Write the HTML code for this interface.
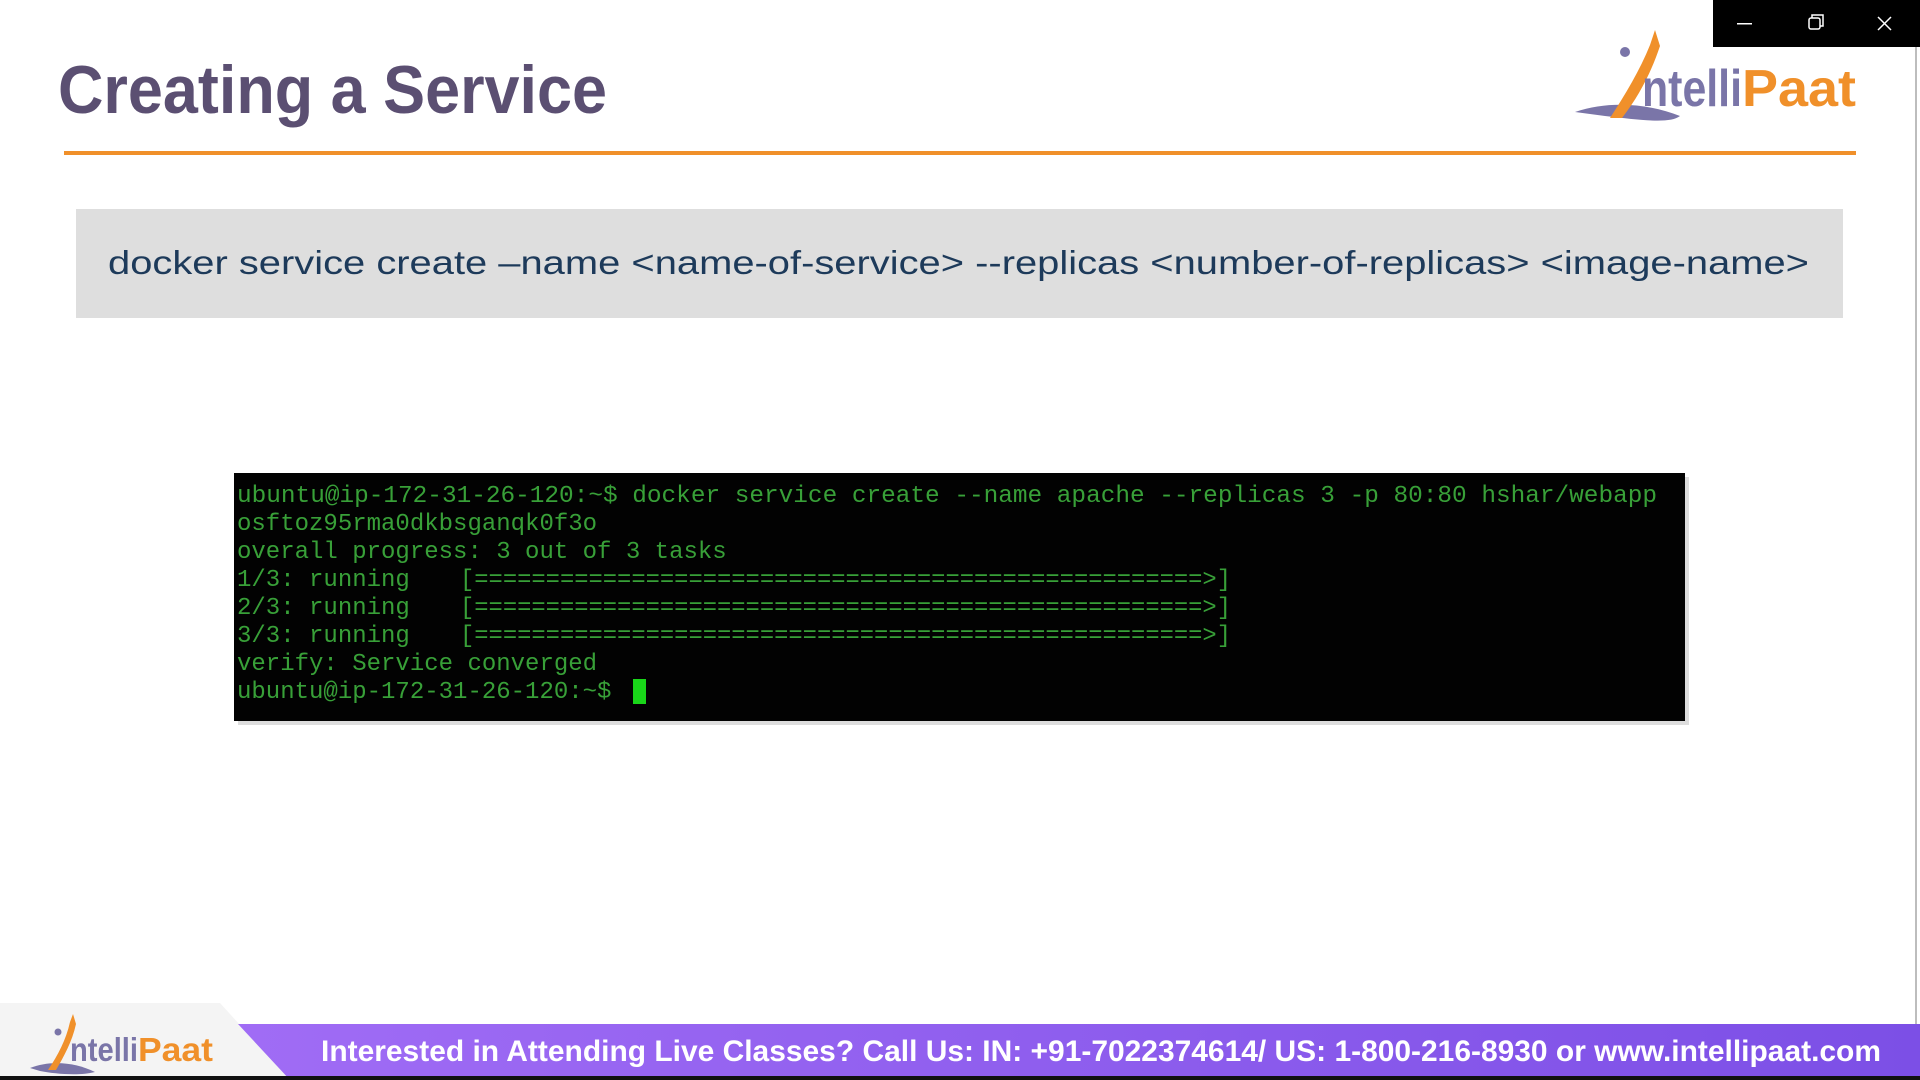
<!DOCTYPE html>
<html><head><meta charset="utf-8"><style>
html,body{margin:0;padding:0;width:1920px;height:1080px;overflow:hidden;background:#fff}
svg{display:block}
</style></head><body>
<svg width="1920" height="1080" viewBox="0 0 1920 1080" xmlns="http://www.w3.org/2000/svg">
<defs>
<linearGradient id="pg" x1="0" x2="1" y1="0" y2="0"><stop offset="0" stop-color="#a06cf5"/><stop offset="1" stop-color="#7c4fe6"/></linearGradient>
</defs>
<rect width="1920" height="1080" fill="#fff"/>
<text x="58" y="113" font-family="Liberation Sans, sans-serif" font-weight="bold" font-size="68" fill="#5b4f72" textLength="549" lengthAdjust="spacingAndGlyphs">Creating a Service</text>
<rect x="64" y="151" width="1792" height="4" fill="#f0902a"/>
<g>
<path d="M1575 112 C1610 100 1650 104 1680 116 C1670 124 1640 120 1605 116 Z" fill="#7a75a8"/>
<path d="M1610 118 C1625 95 1640 70 1650 45 L1655 30 L1660 46 C1652 70 1640 95 1622 118 Z" fill="#f0902a"/>
<circle cx="1625" cy="52" r="5" fill="#7a75a8"/>
<text x="1642" y="106" font-family="Liberation Sans, sans-serif" font-weight="bold" font-size="52" fill="#7a75a8" textLength="100" lengthAdjust="spacingAndGlyphs">ntelli</text>
<text x="1742" y="106" font-family="Liberation Sans, sans-serif" font-weight="bold" font-size="52" fill="#f0902a" textLength="114" lengthAdjust="spacingAndGlyphs">Paat</text>
</g>
<rect x="1713" y="0" width="207" height="47" fill="#000"/>
<rect x="1737" y="23" width="15" height="1.5" fill="#fff"/>
<rect x="1809" y="18" width="11" height="11" rx="2" fill="none" stroke="#fff" stroke-width="1.5"/>
<path d="M1812 18 V15 H1823 V26 H1820" fill="none" stroke="#fff" stroke-width="1.5"/>
<path d="M1878 17 L1891 30 M1891 17 L1878 30" stroke="#fff" stroke-width="1.5"/>
<rect x="1915" y="47" width="2" height="977" fill="#bdbdbd"/>
<rect x="76" y="209" width="1767" height="109" fill="#dedede"/>
<text x="108" y="274" font-family="Liberation Sans, sans-serif" font-size="33" fill="#1d3a5a" textLength="1701" lengthAdjust="spacingAndGlyphs">docker service create –name &lt;name-of-service&gt; --replicas &lt;number-of-replicas&gt; &lt;image-name&gt;</text>
<rect x="238" y="477" width="1451" height="248" fill="#bbb" opacity="0.5"/>
<rect x="234" y="473" width="1451" height="248" fill="#020202"/>
<g font-family="Liberation Mono, monospace" font-size="24" fill="#38a038">
<text x="237" y="502" textLength="1420" lengthAdjust="spacingAndGlyphs">ubuntu@ip-172-31-26-120:~$ docker service create --name apache --replicas 3 -p 80:80 hshar/webapp</text>
<text x="237" y="530">osftoz95rma0dkbsganqk0f3o</text>
<text x="237" y="558">overall progress: 3 out of 3 tasks</text>
<text x="237" y="586">1/3: running</text>
<text x="237" y="614">2/3: running</text>
<text x="237" y="642">3/3: running</text>
<text x="460" y="586" textLength="771" lengthAdjust="spacingAndGlyphs">[===================================================&gt;]</text>
<text x="460" y="614" textLength="771" lengthAdjust="spacingAndGlyphs">[===================================================&gt;]</text>
<text x="460" y="642" textLength="771" lengthAdjust="spacingAndGlyphs">[===================================================&gt;]</text>
<text x="237" y="670">verify: Service converged</text>
<text x="237" y="698">ubuntu@ip-172-31-26-120:~$</text>
</g>
<rect x="633" y="679" width="13" height="25" fill="#19d619"/>
<path d="M0 1003 L220 1003 L290 1080 L0 1080 Z" fill="#f4f4f4"/>
<path d="M238 1024 L1920 1024 L1920 1080 L290 1080 Z" fill="url(#pg)"/>
<rect x="0" y="1076" width="1920" height="4" fill="#111"/>
<g>
<path d="M30 1068 C50 1060 75 1062 95 1072 C80 1076 55 1074 40 1071 Z" fill="#7a75a8"/>
<path d="M48 1070 C58 1055 66 1040 70 1022 L73 1014 L76 1024 C72 1042 64 1056 56 1070 Z" fill="#f0902a"/>
<circle cx="58" cy="1032" r="3.5" fill="#7a75a8"/>
<text x="70" y="1061" font-family="Liberation Sans, sans-serif" font-weight="bold" font-size="33" fill="#7a75a8" textLength="68" lengthAdjust="spacingAndGlyphs">ntelli</text>
<text x="138" y="1061" font-family="Liberation Sans, sans-serif" font-weight="bold" font-size="33" fill="#f0902a" textLength="75" lengthAdjust="spacingAndGlyphs">Paat</text>
</g>
<text x="321" y="1061" font-family="Liberation Sans, sans-serif" font-weight="bold" font-size="30" fill="#fff" textLength="1560" lengthAdjust="spacingAndGlyphs">Interested in Attending Live Classes? Call Us: IN: +91-7022374614/ US: 1-800-216-8930 or www.intellipaat.com</text>
</svg>
</body></html>
